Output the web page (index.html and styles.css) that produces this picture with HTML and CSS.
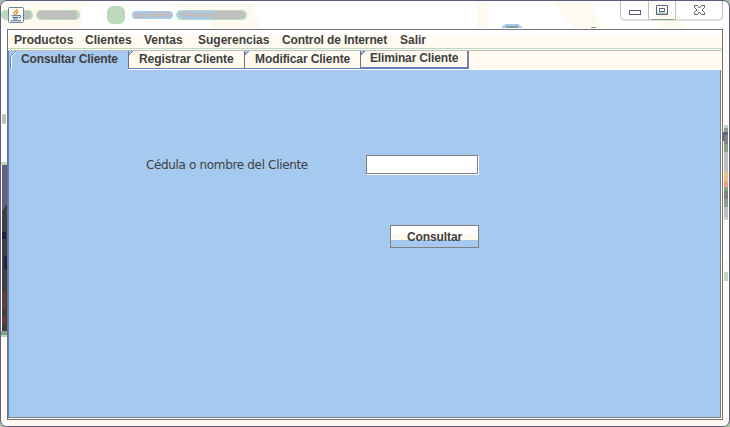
FILE: index.html
```html
<!DOCTYPE html>
<html lang="es">
<head>
<meta charset="utf-8">
<title>Clientes</title>
<link rel="stylesheet" href="styles.css">
</head>
<body>
<div class="window">
  <svg class="glass" width="730" height="427" viewBox="0 0 730 427" aria-hidden="true">
    <path fill="#fffaf0" d="M1 3H88L82 12V28H1zM168 4H250L262 28H212V20L190 10zM477 3H488V28H477zM552 3H590L603 28H574zM650 3H670L684 28H660z"/>
    <path fill="#fffaf0" d="M2 340H7V426H2zM723 30H728V240H723zM723 260H728V426H723zM2 420H728V426H2z"/>
    <g fill="#bbdabc">
      <rect x="1" y="10" width="32" height="10" rx="5"/>
      <rect x="36" y="10" width="44" height="10" rx="5"/>
      <rect x="107" y="6" width="18" height="18" rx="6"/>
      <rect x="132" y="11" width="41" height="8" rx="4" fill="#a6c9ef"/>
      <rect x="176" y="10" width="71" height="10" rx="5"/>
      <path d="M178 12l6-1h34v8h-34l-6-2z" fill="#a6c9ef"/>
    </g>
    <g fill="#bfbfbf">
      <rect x="18" y="11" width="13" height="8" rx="4"/>
      <rect x="38" y="11" width="39" height="8" rx="4"/>
      <rect x="134" y="13" width="15" height="5" rx="2"/>
      <rect x="150" y="12" width="20" height="5" rx="2"/>
      <path d="M180 13l8-1 8 1h14l6-2h24q5 1 5 4t-5 4h-24l-8-2h-22q-7-1-6-4z"/>
    </g>
    <path d="M113 13l2-1 3-1" stroke="#e5c27c" fill="none"/>
    <path fill="#a6c9ef" d="M502 26l4-2h12l4 3v1h-20z"/>
    <path fill="#85a285" d="M506 26h12v2h-12zM591 27h5v1h-5z"/>
    <path fill="#bfbfbf" d="M2 115h4v8H2z"/>
    <path fill="#bbdabc" d="M2 114h4v1H2zM2 123h4v1H2zM1 162h6v3H1z"/>
    <path fill="#626082" d="M2 165h5v40l-5 5z"/>
    <path fill="#403f40" d="M2 210l5-6v127H2z"/>
    <path fill="#202040" d="M2 232h4v7H2zM4 256h3v13H4z"/>
    <path fill="#603f40" d="M2 292l4-2v19l-4 2zM2 316h4v7H2z"/>
    <path fill="#85a285" d="M1 331h6v4H1z"/>
    <path fill="#bbdabc" d="M1 335h6v2H1zM724 125h4v3h-4zM724 217h4v3h-4zM724 272h4v9h-4z"/>
    <path fill="#85a285" d="M724 128h4v24h-4zM724 185h4v22h-4z"/>
    <path fill="#626082" d="M723 132h5v9h-5z"/>
    <path fill="#808080" d="M724 135h4v9h-4zM724 191h4v8h-4z"/>
    <path fill="#bfbfbf" d="M724 152h4v20h-4zM724 207h4v10h-4z"/>
    <path fill="#e5c27c" d="M724 172h4v13h-4z"/>
    <path fill="#ef9d82" d="M724 180l4 3v4h-4z"/>
  </svg>

  <header class="titlebar">
    <svg class="app-icon" width="16" height="16" viewBox="0 0 16 16">
      <rect x=".5" y=".5" width="15" height="15" rx="1" fill="#fff" stroke="#6b8299"/>
      <path d="M9 2c.5 2-3.500 2.500-3 4.500L7.500 8M10.500 4c-2.500 1-2 2-1.500 3.500" fill="none" stroke="#e0862c" stroke-width="1.300"/>
      <path d="M3.500 8.700h7.500M4.500 10.500h5.500M5 12h4.500M11 8.500c2.500-.5 2 2 0 2.500M2.500 13.700h10.500" fill="none" stroke="#4b6c91" stroke-width="1.100"/>
    </svg>
    <div class="controls">
      <svg width="103" height="20" viewBox="0 0 103 20">
        <path d="M.5 0v15q0 4 4 4h94q4 0 4-4V0M28.500 0v19M55.500 0v19" fill="none" stroke="#bfbfbf"/>
        <path d="M31 18.500h23" stroke="#85a285"/>
        <rect x="9.500" y="9.500" width="11" height="4" fill="#fff" stroke="#5c5a7e"/>
        <path d="M36 11h11v2H36z" fill="#bbdabc"/>
        <path d="M36.500 4.500h11v9h-11zM39.500 7.500h5v3h-5z" fill="#fff" stroke="#5c5a7e"/>
        <path d="M37 11h10v2H37z" fill="#bbdabc"/>
        <path d="M74.500 4.500h3l2 2.500 2-2.500h3v2l-2.500 2.500 2.500 2.500v2h-3l-2-2.500-2 2.500h-3v-2l2.500-2.500-2.500-2.500z" fill="#fff" stroke="#55655f"/>
      </svg>
    </div>
  </header>

  <main class="frame">
    <nav class="menu">
      <span class="m1">Productos</span><span class="m2">Clientes</span><span class="m3">Ventas</span><span class="m4">Sugerencias</span><span class="m5">Control de Internet</span><span>Salir</span>
    </nav>
    <div class="tabs">
      <div class="tab active">Consultar Cliente</div>
      <div class="tab">Registrar Cliente</div>
      <div class="tab">Modificar Cliente</div>
      <div class="tab last">Eliminar Cliente</div>
    </div>
    <section class="panel">
      <div class="row">
        <label for="q">Cédula o nombre del Cliente</label>
        <input id="q" type="text">
      </div>
      <button type="button">Consultar</button>
    </section>
  </main>
</div>
</body>
</html>
```

FILE: styles.css
```css
* { box-sizing: border-box; }
body {
  margin: 0;
  background: #a9bfae;
  font: bold 12px/14px "Liberation Sans", Arial, sans-serif;
  color: #403f40;
}
.window {
  position: relative;
  width: 730px;
  height: 427px;
  overflow: hidden;
  border: 1px solid #5c5a7e;
  border-radius: 7px;
  background: #fff;
}
.glass { position: absolute; left: -1px; top: -1px; }
.titlebar {
  position: relative;
  display: flex;
  justify-content: space-between;
  height: 28px;
  padding: 0 6px 0 7px;
}
.app-icon { margin-top: 6px; }
.controls { height: 20px; }
.controls svg { display: block; }
.frame {
  position: relative;
  display: flex;
  flex-direction: column;
  width: 716px;
  height: 391px;
  margin-left: 6px;
  border: 1px solid #73727c;
  background: #fffaf0;
}
.menu {
  display: flex;
  height: 19px;
  padding: 3px 0 0 6px;
  border-bottom: 1px solid #bbdabc;
  background: linear-gradient(#fff 5px, #fffaf0 5px);
  white-space: nowrap;
}
.m1 { width: 71px; }
.m2 { width: 59px; }
.m3 { width: 54px; }
.m4 { width: 84px; }
.m5 { width: 118px; letter-spacing: -0.120px; }
.tabs {
  display: flex;
  height: 20px;
  margin-top: 1px;
  border-top: 1px solid #bfbfbf;
  background: linear-gradient(#fffaf0 18px, #fff 18px);
}
.tab {
  position: relative;
  width: 116px;
  height: 18px;
  padding: 1px 0 0 10px;
  border-left: 1px solid #73727c;
  border-bottom: 1px solid #6382bf;
  letter-spacing: -0.090px;
  white-space: nowrap;
}
.tab::before {
  content: "";
  position: absolute;
  left: 0;
  top: 0;
  width: 5px;
  height: 5px;
  background: linear-gradient(135deg, #a6c9ef 30%, #6382bf 30% 42%, transparent 42%);
}
.active {
  width: 120px;
  height: 19px;
  padding-left: 12px;
  border-left-color: #6382bf;
  border-bottom: 0;
  background: #a6c9ef;
  letter-spacing: -0.150px;
}
.active::before {
  left: 1px;
  width: 6px;
  height: 19px;
  background: linear-gradient(135deg, transparent 42%, #6382bf 42% 52%, #fff 52% 64%, transparent 64%) 0 0 / 6px 6px no-repeat,
    linear-gradient(90deg, #6382bf 1px, #fff 1px 2px, transparent 2px) 0 5px / 2px 13px no-repeat;
}
.last {
  width: 109px;
  padding: 0 0 0 9px;
  border-right: 2px solid #73829f;
  border-bottom: 2px solid #6382bf;
  letter-spacing: -0.150px;
}
.panel {
  flex: 1;
  width: 713px;
  margin-bottom: 1px;
  border-left: 1px solid #6382bf;
  border-right: 1px solid #808080;
  border-bottom: 1px solid #808080;
  background: #a6c9ef;
}
.row {
  display: flex;
  align-items: flex-start;
  padding: 85px 0 0 137px;
}
label {
  width: 220px;
  padding-top: 3px;
  font: 12px/14px "DejaVu Sans", sans-serif;
  letter-spacing: -0.340px;
}
input {
  width: 112px;
  height: 19px;
  border: 1px solid #808080;
  border-radius: 0;
  background: #fff;
  box-shadow: 1px 1px #fff;
}
button {
  display: block;
  width: 89px;
  height: 23px;
  margin: 51px 0 0 381px;
  padding: 0;
  border: 1px solid #808080;
  background: linear-gradient(#fff 8px, #fffaf0 8px 14px, #a6c9ef 14px);
  font: inherit;
  color: inherit;
  letter-spacing: -0.100px;
}
```
